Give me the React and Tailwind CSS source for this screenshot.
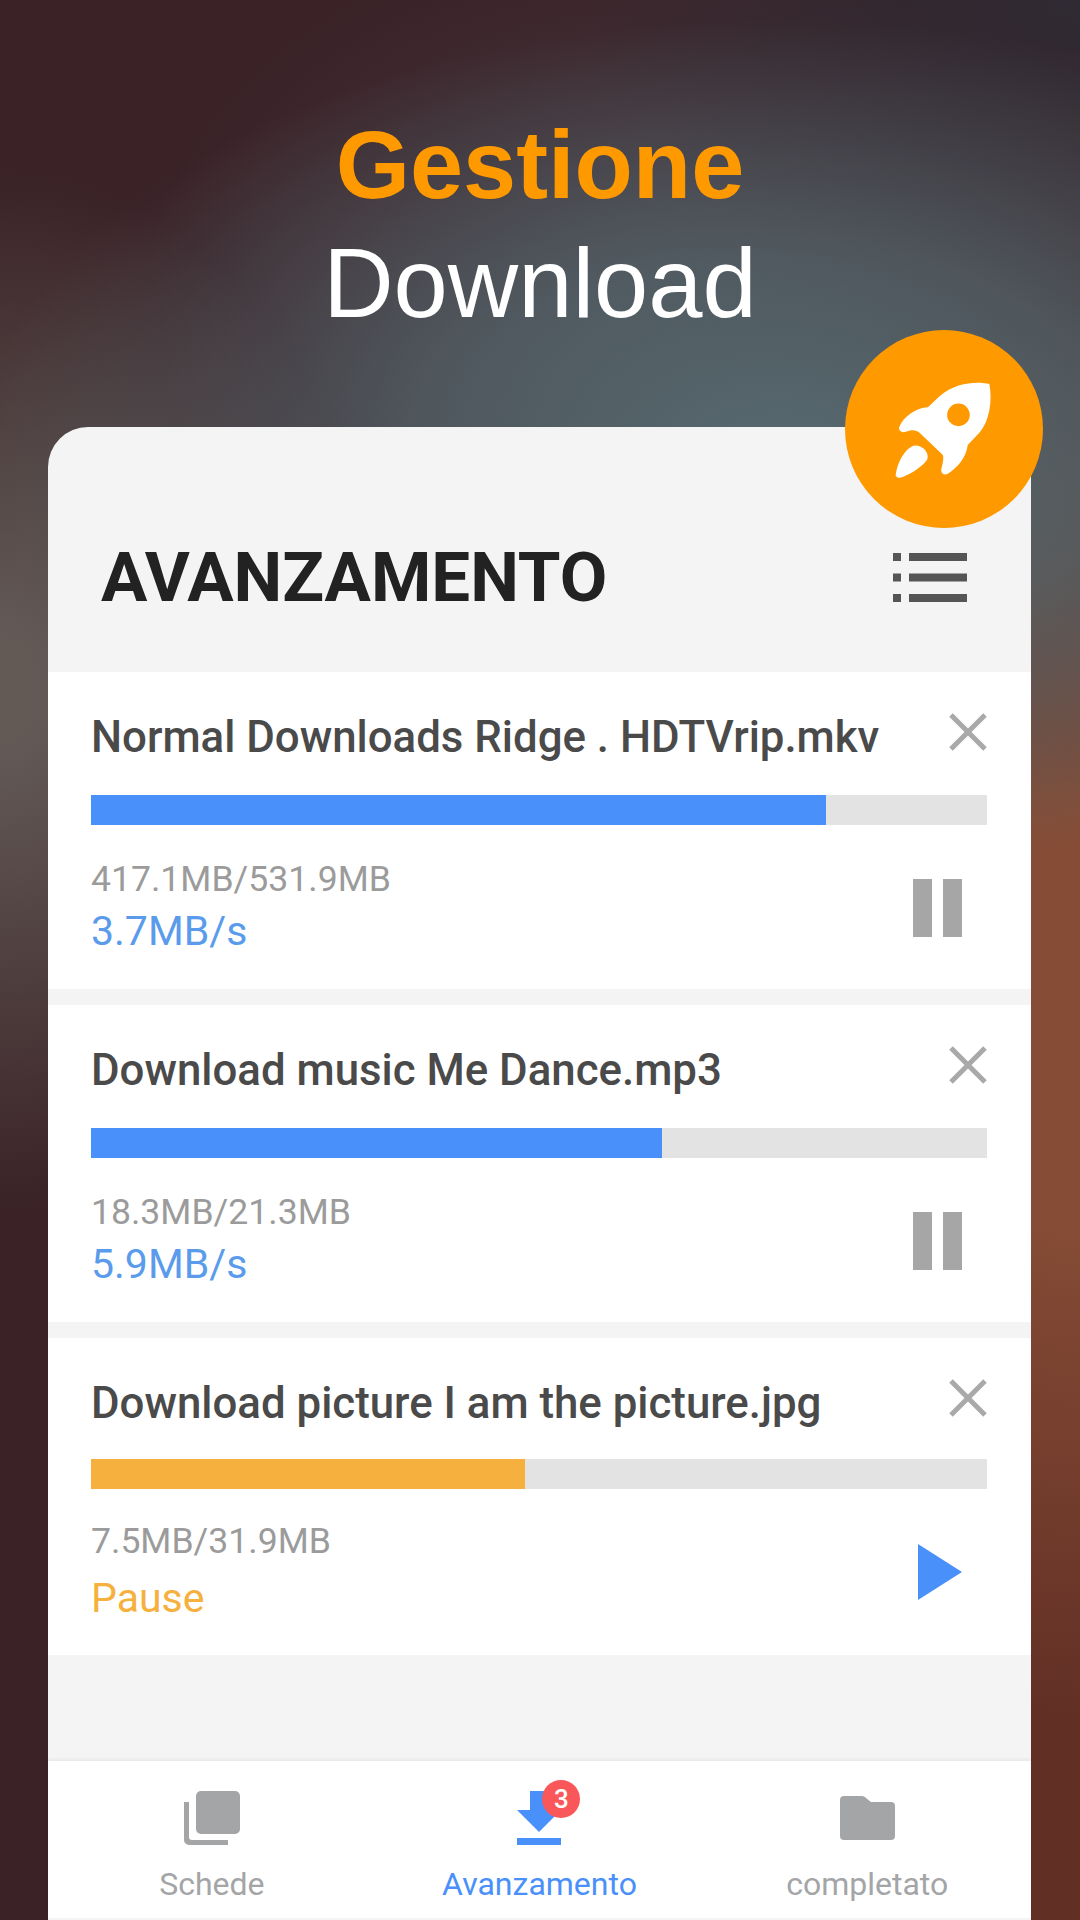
const downloads = [
  { name: "Normal Downloads Ridge . HDTVrip.mkv", size: "417.1MB/531.9MB", status: "3.7MB/s", fill: "w-[735px]", paused: false },
  { name: "Download music Me Dance.mp3", size: "18.3MB/21.3MB", status: "5.9MB/s", fill: "w-[571px]", paused: false },
  { name: "Download picture I am the picture.jpg", size: "7.5MB/31.9MB", status: "Pause", fill: "w-[434px]", paused: true },
];

const RocketIcon = () => (
  <svg viewBox="340 230 310 310" className="w-[103px] h-[103px]">
    <path
      fill="#ffffff"
      fillRule="evenodd"
      d="M630 248C600 240 530 240 480 285L445 318C410 320 370 345 358 380C358 392 368 395 378 392C395 385 410 385 420 395L490 462C495 475 485 500 485 510C488 522 498 522 505 518C535 500 560 470 565 432L600 395C630 360 640 300 630 248ZM537 307A34 34 0 1 1 537 375A34 34 0 1 1 537 307Z"
    />
    <path fill="#ffffff" d="M348 525C350 490 375 440 405 433C430 432 450 455 443 475C430 495 380 530 355 530Z" />
  </svg>
);

const ListIcon = () => (
  <svg viewBox="0 0 74 49" className="w-[74px] h-[49px]" fill="#555555">
    <rect x="0" y="0" width="8" height="8" />
    <rect x="16" y="0" width="58" height="8" />
    <rect x="0" y="20.5" width="8" height="8" />
    <rect x="16" y="20.5" width="58" height="8" />
    <rect x="0" y="41" width="8" height="8" />
    <rect x="16" y="41" width="58" height="8" />
  </svg>
);

const CloseIcon = () => (
  <svg viewBox="0 0 38 38" className="w-[38px] h-[38px] -mt-[7px] shrink-0" stroke="#a9a9a9" strokeWidth="5">
    <path d="M2 2L36 36M36 2L2 36" />
  </svg>
);

const TabsIcon = () => (
  <svg viewBox="0 0 56 55" className="w-[56px] h-[55px]" fill="#a4a5a7">
    <rect x="12" y="1" width="44" height="43" rx="5" />
    <path d="M0 12H5V47a3 3 0 0 0 3 3H44V55H5a5 5 0 0 1-5-5Z" />
  </svg>
);

const DownloadIcon = () => (
  <svg viewBox="0 0 44 55" className="w-[44px] h-[55px]" fill="#4a90fb">
    <path d="M13 1H32V20H44L22 42L0 20H13Z" />
    <rect x="0" y="48" width="44" height="7" />
  </svg>
);

const FolderIcon = () => (
  <svg viewBox="0 0 55 44" className="w-[55px] h-[44px]" fill="#a4a5a7">
    <path d="M4 0H22C24 0 25 1 26 2L31 6H51a4 4 0 0 1 4 4V40a4 4 0 0 1-4 4H4a4 4 0 0 1-4-4V4a4 4 0 0 1 4-4Z" />
  </svg>
);

const DownloadRow = ({ item }) => (
  <div className="h-[317px] bg-white pl-[43px] pr-[44px] pt-[48px] font-['Roboto',sans-serif]">
    <div className={`flex items-start justify-between ${item.paused ? "h-[73px]" : "h-[75px]"}`}>
      <p className="text-[43.8px] leading-[34px] font-medium text-[#4a4a4a] whitespace-nowrap">{item.name}</p>
      <CloseIcon />
    </div>
    <div className="h-[30px] bg-[#e3e3e3]">
      <div className={`h-full ${item.fill} ${item.paused ? "bg-[#f5b03e]" : "bg-[#4a90fb]"}`} />
    </div>
    <div className={`flex items-center justify-between ${item.paused ? "mt-[30px]" : "mt-[32px]"}`}>
      <div>
        <p className="text-[35.6px] leading-[44px] text-[#9b9b9b]">{item.size}</p>
        <p className={`text-[41px] leading-[46px] ${item.paused ? "mt-[12px] text-[#f5b03e]" : "mt-[7px] text-[#5a9bec]"}`}>{item.status}</p>
      </div>
      {item.paused ? (
        <div className="w-0 h-0 mt-[4px] mr-[25px] border-y-[28px] border-y-transparent border-l-[44px] border-l-[#4a90fb]" />
      ) : (
        <div className="flex gap-[11px] mt-[4px] mr-[25px]">
          <div className="w-[19px] h-[58px] bg-[#a6a6a6]" />
          <div className="w-[19px] h-[58px] bg-[#a6a6a6]" />
        </div>
      )}
    </div>
  </div>
);

const App = () => {
  return (
    <div className="w-[1080px] h-[1920px] overflow-hidden flex flex-col items-center bg-[#3a2227] bg-[radial-gradient(ellipse_800px_430px_at_780px_450px,#56696f_0%,rgba(86,105,111,0.7)_45%,transparent_100%),radial-gradient(ellipse_500px_700px_at_1080px_1020px,#864c35_0%,#864c35_30%,transparent_100%),radial-gradient(ellipse_600px_1000px_at_1080px_1920px,#622f25_0%,#622f25_50%,transparent_100%),radial-gradient(ellipse_380px_520px_at_0px_690px,#635a56_0%,#635a56_10%,transparent_100%),radial-gradient(ellipse_500px_300px_at_1080px_0px,#2f2a33_0%,transparent_100%),radial-gradient(ellipse_500px_350px_at_650px_280px,#453a42_0%,transparent_100%)]">
      <div className="h-[427px] w-full pt-[107px] text-center font-['Liberation_Sans',sans-serif]">
        <h1 className="text-[95.5px] leading-[116px] font-bold text-[#ff9900]">Gestione</h1>
        <h2 className="mt-[3px] text-[97.5px] leading-[116px] text-white">Download</h2>
      </div>

      <div className="relative w-[983px] flex-1 -ml-[1px] rounded-t-[40px] bg-[#f4f4f4] flex flex-col">
        <div className="absolute -top-[97px] -right-[12px] w-[198px] h-[198px] rounded-full bg-[#ff9900] flex items-center justify-center">
          <RocketIcon />
        </div>

        <div className="h-[245px] flex items-center justify-between pl-[53px] pr-[64px] pt-[56px]">
          <h3 className="font-['Roboto',sans-serif] text-[69px] font-bold text-[#222222] leading-none">AVANZAMENTO</h3>
          <ListIcon />
        </div>

        <div className="flex flex-col gap-[16px]">
          {downloads.map((item) => (
            <DownloadRow key={item.name} item={item} />
          ))}
        </div>

        <div className="flex-1" />

        <div className="h-[157px] mb-[2px] bg-white grid grid-cols-3 shadow-[0_-2px_3px_rgba(0,0,0,0.05)] font-['Roboto',sans-serif] text-[32px]">
          <div className="flex flex-col items-center">
            <div className="h-[84px] flex items-end"><TabsIcon /></div>
            <span className="mt-[22px] leading-[34px] text-[#a4a5a7]">Schede</span>
          </div>
          <div className="flex flex-col items-center">
            <div className="relative h-[84px] flex items-end">
              <DownloadIcon />
              <span className="absolute top-[19px] left-[25px] w-[38px] h-[38px] rounded-full bg-[#f95759] text-white text-[26px] font-medium leading-[38px] text-center">3</span>
            </div>
            <span className="mt-[22px] leading-[34px] text-[#4a90fb]">Avanzamento</span>
          </div>
          <div className="flex flex-col items-center">
            <div className="h-[79px] flex items-end"><FolderIcon /></div>
            <span className="mt-[27px] leading-[34px] text-[#a4a5a7]">completato</span>
          </div>
        </div>
      </div>
    </div>
  );
};

export default App;
